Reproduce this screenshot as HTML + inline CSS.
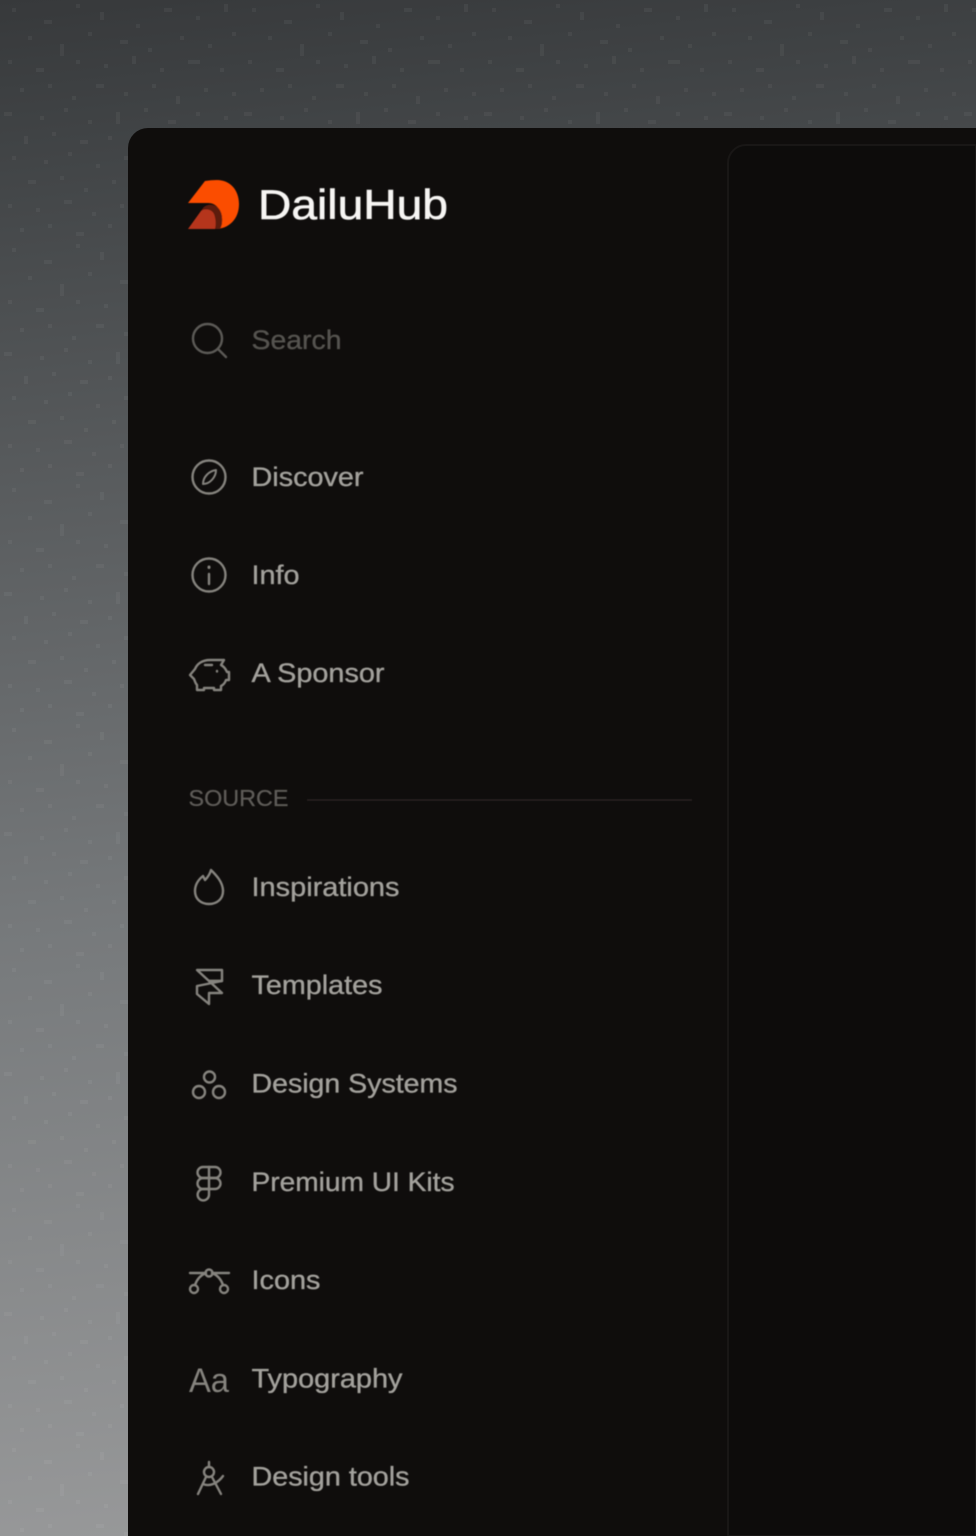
<!DOCTYPE html>
<html lang="en">
<head>
<meta charset="utf-8">
<title>DailuHub</title>
<style>
html,body{margin:0;padding:0;width:976px;height:1536px;overflow:hidden;background:#3a3c3e}
svg{display:block}
text{font-family:"Liberation Sans",sans-serif}
.i{fill:none;stroke:#85837e;stroke-width:2.4;stroke-linecap:round;stroke-linejoin:round}
.t{font-size:27px;fill:#a3a19c;stroke:#a3a19c;stroke-width:.35}
</style>
</head>
<body>
<svg width="976" height="1536" viewBox="0 0 976 1536" xmlns="http://www.w3.org/2000/svg">
<defs>
<linearGradient id="bg" gradientUnits="userSpaceOnUse" x1="0" y1="0" x2="150" y2="1536">
<stop offset="0" stop-color="#37393b"/>
<stop offset=".08" stop-color="#3f4244"/>
<stop offset=".3" stop-color="#575a5c"/>
<stop offset=".6" stop-color="#76797b"/>
<stop offset="1" stop-color="#979899"/>
</linearGradient>
<pattern id="grain" width="240" height="240" patternUnits="userSpaceOnUse">
<path fill="#fff" d="M12 8h4v4h-4zM44 20h8v4h-8zM76 4h4v4h-4zM100 12h4v8h-4zM136 24h4v4h-4zM164 8h8v4h-8zM196 16h4v4h-4zM224 4h4v8h-4zM28 36h4v4h-4zM60 44h4v12h-4zM88 32h4v4h-4zM120 40h8v4h-8zM148 48h4v4h-4zM180 36h4v4h-4zM208 44h4v4h-4zM232 32h4v4h-4zM8 60h4v4h-4zM36 68h8v4h-8zM76 60h4v4h-4zM104 64h4v4h-4zM132 56h4v8h-4zM160 68h4v4h-4zM188 60h12v4h-12zM220 68h4v4h-4zM20 88h4v4h-4zM48 84h4v4h-4zM72 96h4v4h-4zM96 84h8v4h-8zM124 92h4v4h-4zM152 84h4v4h-4zM176 96h4v8h-4zM204 88h4v4h-4zM232 92h4v4h-4zM4 112h8v4h-8zM40 116h4v4h-4zM64 108h4v4h-4zM88 120h4v4h-4zM116 112h4v12h-4zM144 108h4v4h-4zM168 120h8v4h-8zM196 112h4v4h-4zM224 116h4v4h-4zM24 136h4v8h-4zM52 132h4v4h-4zM80 140h8v4h-8zM108 136h4v4h-4zM136 144h4v4h-4zM160 132h4v4h-4zM188 140h4v4h-4zM212 132h8v4h-8zM12 156h4v4h-4zM44 160h4v4h-4zM68 152h4v4h-4zM96 164h4v4h-4zM124 156h8v4h-8zM152 164h4v4h-4zM180 152h4v8h-4zM208 164h4v4h-4zM232 156h4v4h-4zM28 180h8v4h-8zM60 176h4v4h-4zM84 188h4v4h-4zM112 180h4v4h-4zM140 188h4v8h-4zM168 176h4v4h-4zM196 184h8v4h-8zM224 180h4v4h-4zM8 204h4v4h-4zM36 208h4v4h-4zM64 200h8v4h-8zM92 212h4v4h-4zM120 204h4v4h-4zM148 212h4v4h-4zM176 204h4v4h-4zM204 212h4v8h-4zM232 204h4v4h-4zM20 228h4v4h-4zM48 224h4v4h-4zM76 232h8v4h-8zM108 224h4v4h-4zM132 232h4v4h-4zM160 224h8v4h-8zM192 232h4v4h-4zM220 228h4v4h-4z"/>
</pattern>
<filter id="soft" x="-5%" y="-5%" width="110%" height="110%"><feGaussianBlur stdDeviation="0.45"/></filter>
</defs>
<rect width="976" height="1536" fill="url(#bg)"/>
<rect width="976" height="1536" fill="url(#grain)" opacity=".045"/>
<path d="M976 128H148a20 20 0 0 0-20 20V1536H976Z" fill="#0f0d0c"/>
<path d="M976 145H746a18 18 0 0 0-18 18V1536H976Z" fill="#0d0c0b" stroke="#191716" stroke-width="2"/>

<g filter="url(#soft)">
<!-- logo -->
<path d="M188 203 205 181Q211 180 217 180C230 180 239 190 239 204C239 219 229 229 215 229L220 229C223 224 223 214 219 209C216 205 213 203 208 203Z" fill="#fb4e05"/>
<path d="M188 229 203 208C206 204 214 203 219 209C223 214 223 224 220 229Z" fill="#5c1a0c"/>
<path d="M188 229 201 211C204 208 212 209 214 214C216 219 216 225 215 229Z" fill="#b5351a"/>
<text x="258" y="219" font-size="42" fill="#f6f5f3" stroke="#f6f5f3" stroke-width=".6" textLength="190" lengthAdjust="spacingAndGlyphs">DailuHub</text>

<!-- search -->
<g class="i" style="stroke:#5c5a56">
<circle cx="207.500" cy="338.500" r="14.500"/>
<path d="M218 349 226 357"/>
</g>
<text class="t" x="251.500" y="349" style="fill:#55534f;stroke:#55534f" textLength="90" lengthAdjust="spacingAndGlyphs">Search</text>

<!-- discover -->
<g class="i">
<circle cx="209" cy="477" r="16.500"/>
<path d="M203 484C203 477 209 471 216 470C216 477 210 484 203 484Z" stroke-width="2"/>
</g>
<text class="t" x="251.500" y="486" textLength="112" lengthAdjust="spacingAndGlyphs">Discover</text>

<!-- info -->
<g class="i">
<circle cx="209" cy="575" r="16.500"/>
<path d="M209 574V584"/>
<path d="M209 567V567.500" stroke-width="3"/>
</g>
<text class="t" x="251.500" y="584" textLength="48" lengthAdjust="spacingAndGlyphs">Info</text>

<!-- sponsor -->
<g class="i">
<path d="M190 675 195 669C197 664 202 660 210 660H224L221 665C225 667 226 670 227 672H229V680H226C225 683 223 685 221 686V690H214V688H204V690H197V685C195 683 195 681 194 679Z"/>
<path d="M205 665H212"/>
<path d="M217 671V671.500"/>
</g>
<text class="t" x="251.500" y="682" textLength="133" lengthAdjust="spacingAndGlyphs">A Sponsor</text>

<!-- section -->
<text x="188.500" y="806" font-size="23.500" fill="#5e5c58" stroke="#5e5c58" stroke-width=".25" textLength="100" lengthAdjust="spacingAndGlyphs">SOURCE</text>
<rect x="307" y="799" width="385" height="2" fill="#211f1e"/>

<!-- inspirations -->
<g class="i">
<path d="M211 870C216 875 223 882 223 891C223 899 217 904 209 904C201 904 195 899 195 891C195 885 198 880 203 876L205 880C208 877 210 874 211 870Z"/>
</g>
<text class="t" x="251.500" y="896" textLength="148" lengthAdjust="spacingAndGlyphs">Inspirations</text>

<!-- templates -->
<g class="i">
<path d="M197 970H222V981H209Z"/>
<path d="M209 981 222 981 197 986V994L209 1004V993H222L209 981"/>
</g>
<text class="t" x="251.500" y="994" textLength="131" lengthAdjust="spacingAndGlyphs">Templates</text>

<!-- design systems -->
<g class="i">
<circle cx="209.500" cy="1077" r="5.500"/>
<circle cx="199" cy="1092" r="6"/>
<circle cx="219" cy="1092" r="6"/>
</g>
<text class="t" x="251.500" y="1092.500" textLength="206" lengthAdjust="spacingAndGlyphs">Design Systems</text>

<!-- figma -->
<g class="i">
<path d="M203 1167H215A5.500 5.500 0 0 1 215 1178H203A5.500 5.500 0 0 1 203 1167Z"/>
<path d="M209 1167V1189"/>
<path d="M203 1178H215A5.500 5.500 0 0 1 215 1189H203A5.500 5.500 0 0 1 203 1178Z"/>
<path d="M203 1189H209V1195A5.700 5.700 0 1 1 203 1189Z"/>
</g>
<text class="t" x="251.500" y="1191" textLength="203" lengthAdjust="spacingAndGlyphs">Premium UI Kits</text>

<!-- icons -->
<g class="i">
<circle cx="209" cy="1273" r="3.500"/>
<circle cx="194" cy="1289" r="4"/>
<circle cx="224" cy="1289" r="4"/>
<path d="M190 1273H205M213 1273H229"/>
<path d="M195 1285C197 1279 201 1275 206 1273M223 1285C221 1279 217 1275 212 1273"/>
</g>
<text class="t" x="251.500" y="1289" textLength="69" lengthAdjust="spacingAndGlyphs">Icons</text>

<!-- Aa -->
<text x="189" y="1392" font-size="34" fill="#85837e" textLength="40" lengthAdjust="spacingAndGlyphs">Aa</text>
<text class="t" x="251.500" y="1387.500" textLength="151" lengthAdjust="spacingAndGlyphs">Typography</text>

<!-- compass -->
<g class="i">
<circle cx="209" cy="1472" r="5"/>
<path d="M209 1462V1467"/>
<path d="M206 1477 198 1494M212 1477 221 1494"/>
<path d="M203 1484C210 1487 218 1483 223 1476"/>
</g>
<text class="t" x="251.500" y="1485.500" textLength="158" lengthAdjust="spacingAndGlyphs">Design tools</text>
</g>
</svg>
</body>
</html>
